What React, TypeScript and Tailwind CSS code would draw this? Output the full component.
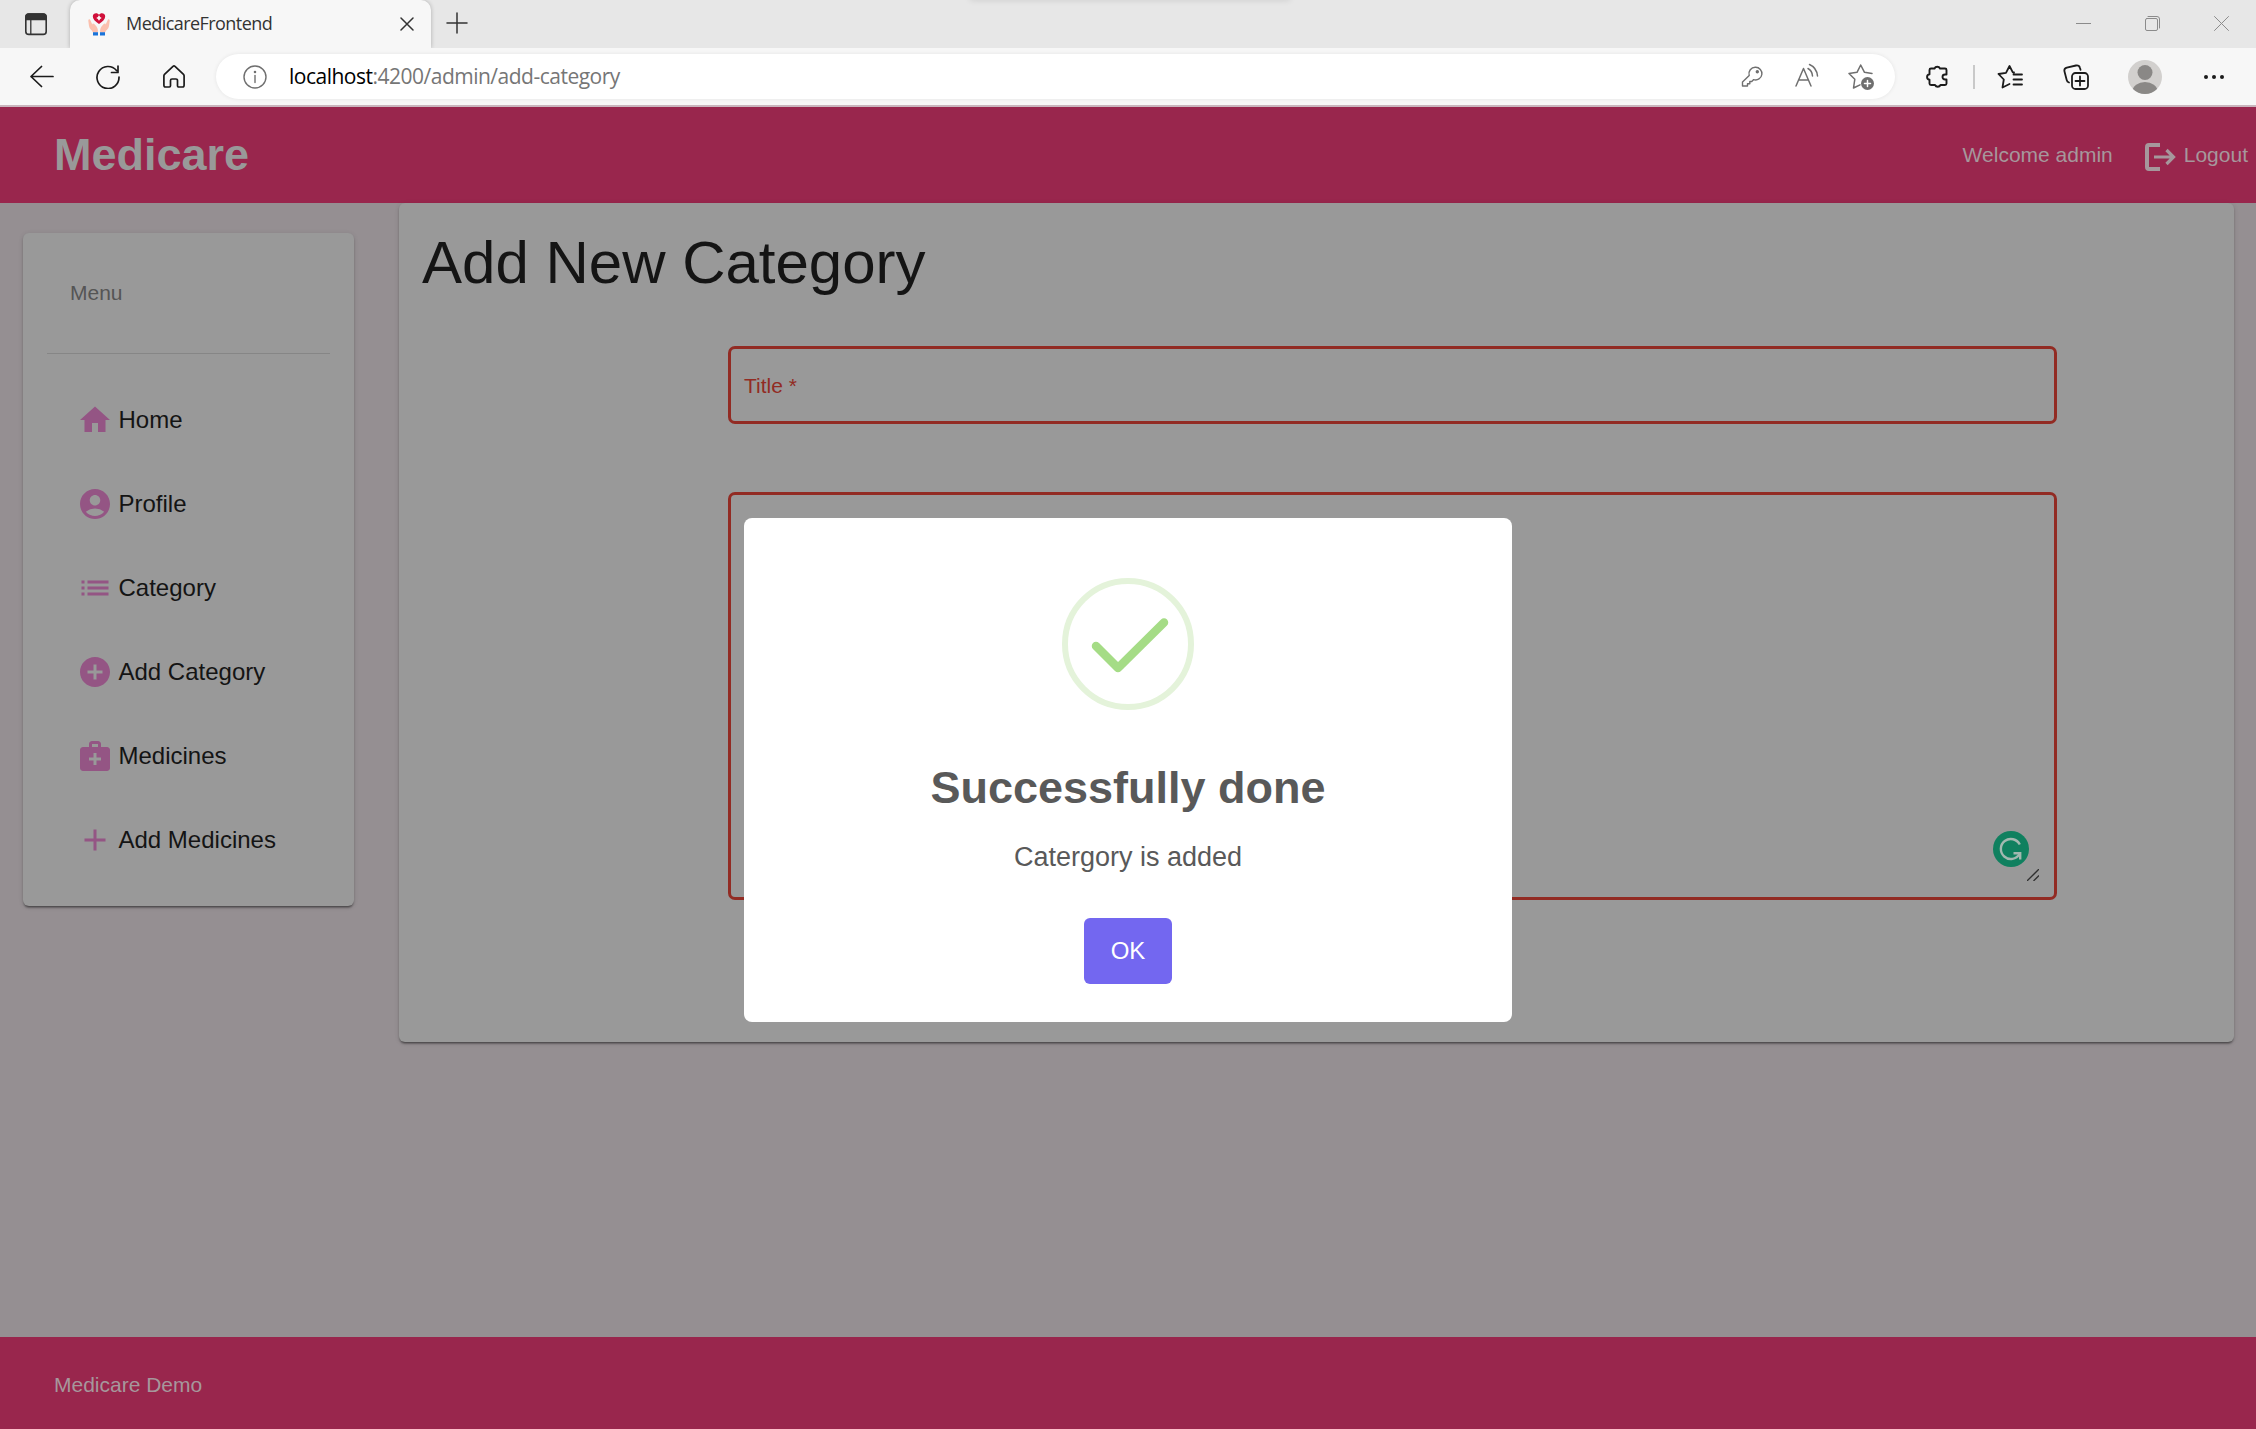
import React from "react";
import {
  MdHome,
  MdAccountCircle,
  MdList,
  MdAddCircle,
  MdMedicalServices,
  MdAdd,
} from "react-icons/md";

const stroke = {
  fill: "none",
  stroke: "currentColor",
  strokeLinecap: "round" as const,
  strokeLinejoin: "round" as const,
};

const menu = [
  { label: "Home", Icon: MdHome },
  { label: "Profile", Icon: MdAccountCircle },
  { label: "Category", Icon: MdList },
  { label: "Add Category", Icon: MdAddCircle },
  { label: "Medicines", Icon: MdMedicalServices },
  { label: "Add Medicines", Icon: MdAdd },
];

function Favicon() {
  return (
    <svg viewBox="0 0 24 24" className="h-[24px] w-[24px]">
      <path d="M3.500 8.500C3 6.500 1.200 6.800 1.300 8.800L2 14c.3 3 3 4 4 6.500h4.800c.4-3-.3-4.500-1.300-6L7.300 12c-1-1.200-2.500-.500-1.800 1zM20.500 8.500c.5-2 2.300-1.700 2.200.3L22 14c-.3 3-3 4-4 6.500h-4.800c-.4-3 .3-4.500 1.300-6l2.200-2.500c1-1.200 2.500-.500 1.800 1z" fill="#fbc0ae" />
      <path d="M12 12C8 9.500 5.800 7 5.800 4.300 5.800.800 10.500.200 12 2.800c1.500-2.600 6.200-2 6.200 1.500C18.200 7 16 9.500 12 12z" fill="#d0103a" />
      <path d="M12 3.800v4.400M9.800 6h4.400" stroke="#fff" strokeWidth="1.600" />
      <path d="M6 20.300h5v3.200H6zM13 20.300h5v3.200h-5z" fill="#1a73d9" />
    </svg>
  );
}

function TabStrip() {
  return (
    <div className="relative flex h-[48px] overflow-hidden bg-[#e7e7e7] text-[#333]">
      <div className="absolute left-[970px] top-[-6px] h-[6px] w-[320px] shadow-[0_0_6px_rgba(0,0,0,0.12)]" />
      <div className="flex w-[70px] items-center pl-[24px]">
        <svg viewBox="0 0 24 24" className="h-[24px] w-[24px]" {...stroke} strokeWidth="1.600">
          <rect x="1.800" y="2" width="20.400" height="20.400" rx="3" />
          <path d="M2 5c0-2 1-3 3-3h14c2 0 3 1 3 3v2.500H2z" fill="currentColor" />
          <path d="M6.800 8v14" strokeWidth="1.300" />
        </svg>
      </div>
      <div className="flex w-[361px] items-center rounded-t-[10px] bg-[#f7f7f7] pl-[17px] shadow-[0_0_4px_rgba(0,0,0,0.25)]">
        <Favicon />
        <span className="mb-[2px] ml-[15px] text-[18px] leading-[24px] tracking-[-0.55px]">MedicareFrontend</span>
        <svg viewBox="0 0 14 14" className="ml-auto mr-[17px] h-[14px] w-[14px]" {...stroke} strokeWidth="1.500">
          <path d="M1 1l12 12M13 1L1 13" />
        </svg>
      </div>
      <svg viewBox="0 0 22 22" className="ml-[15px] mt-[12px] h-[22px] w-[22px]" {...stroke} strokeWidth="1.500">
        <path d="M11 1v20M1 11h20" />
      </svg>
      <div className="mb-[1px] ml-auto mr-[27px] flex items-center gap-[54px] text-[#8b8b8b]">
        <svg viewBox="0 0 15 15" className="h-[15px] w-[15px]" {...stroke} strokeWidth="1">
          <path d="M0 7.500h15" />
        </svg>
        <svg viewBox="0 0 15 15" className="h-[15px] w-[15px]" {...stroke} strokeWidth="1">
          <rect x=".5" y="2.500" width="12" height="12" rx="1.500" />
          <path d="M3 .5h9a2.500 2.500 0 0 1 2.500 2.500v9" />
        </svg>
        <svg viewBox="0 0 15 15" className="h-[15px] w-[15px]" {...stroke} strokeWidth="1">
          <path d="M.5.500l14 14M14.500.500l-14 14" />
        </svg>
      </div>
    </div>
  );
}

function Toolbar() {
  return (
    <div className="flex h-[57px] items-center bg-[#f7f7f7] text-[#1b1b1b]">
      <svg viewBox="0 0 24 24" className="ml-[30px] h-[24px] w-[24px]" {...stroke} strokeWidth="1.700">
        <path d="M23 11.500H1M11.500 1.500L1 11.500l10.500 10" />
      </svg>
      <svg viewBox="0 0 24 24" className="ml-[42px] h-[24px] w-[24px]" {...stroke} strokeWidth="1.700">
        <path d="M23 12A11 11 0 1 1 20.500 5.500M22 1v6.500h-6.500" />
      </svg>
      <svg viewBox="0 0 24 24" className="ml-[42px] h-[24px] w-[24px]" {...stroke} strokeWidth="1.700">
        <path d="M13 1.300q-1-.8-2 0L2.500 9.300q-.6.600-.6 1.500V20.300A1.700 1.700 0 0 0 3.600 22h3.700A1.200 1.200 0 0 0 8.500 20.800v-5.300a1.500 1.500 0 0 1 1.500-1.500h4a1.500 1.500 0 0 1 1.500 1.500v5.300a1.200 1.200 0 0 0 1.200 1.200h3.700a1.700 1.700 0 0 0 1.700-1.700V10.800q0-.900-.6-1.500z" />
      </svg>
      <div className="ml-[30px] flex h-[45px] w-[1679px] items-center rounded-full bg-white pl-[27px] text-[#6f6f6f] shadow-[0_0_4px_rgba(0,0,0,0.08)]">
        <svg viewBox="0 0 24 24" className="h-[24px] w-[24px]" {...stroke} strokeWidth="1.400">
          <circle cx="12" cy="12" r="11" />
          <path d="M12 10.500v7" />
          <circle cx="12" cy="7" r=".6" fill="currentColor" />
        </svg>
        <span className="mb-[1px] ml-[22px] text-[21px] leading-[28px] tracking-[-0.5px] text-[#767676]">
          <span className="text-black">localhost</span>:4200/admin/add-category
        </span>
        <svg viewBox="0 0 24 24" className="ml-auto h-[24px] w-[24px]" {...stroke} strokeWidth="1.400">
          <path d="M15.500 2.300a6.300 6.300 0 1 1-1.800 12.300L11.800 16.500H9.800v2.300H7.500v2.200H2.500v-4L9.200 10.400A6.300 6.300 0 0 1 15.500 2.300z" />
          <circle cx="17.300" cy="6.800" r="1" fill="currentColor" />
        </svg>
        <svg viewBox="0 0 26 26" className="mb-[2px] ml-[30px] h-[26px] w-[26px]" {...stroke} strokeWidth="1.500">
          <path d="M2 23L9.500 5.500 17 23M4.500 17h10M14 5.500c2.800 1.500 4.300 4 4.500 7.500M15.500 1.500c5 2.200 7.500 6 8 11.500" />
        </svg>
        <svg viewBox="0 0 28 28" className="ml-[27px] mr-[20px] h-[28px] w-[28px]" {...stroke} strokeWidth="1.500">
          <path d="M25 10.500l-7.500-1.200L13.700 2 10 9.300 2 10.500l5.800 5.800L6.500 25l6.500-3.200" />
          <circle cx="20.500" cy="20.500" r="6.500" fill="currentColor" stroke="none" />
          <path d="M20.500 17.500v6M17.500 20.500h6" stroke="#fff" />
        </svg>
      </div>
      <svg viewBox="0 0 24 26" className="ml-[30px] h-[26px] w-[24px]" {...stroke} strokeWidth="1.900">
        <path d="M6 4.500H9.500a3 2.800 0 0 1 5.500 0h5q1.500 0 1.500 1.500v4.500h-1.500a2.500 2.500 0 0 0 0 5h1.500v4q0 1.500-1.500 1.500H15.500a3 2.800 0 0 1-5.500 0H6Q4.500 21 4.500 19.500V15.700a3 2.800 0 0 1 0-5.500V6q0-1.500 1.500-1.500z" />
      </svg>
      <div className="ml-[24px] h-[24px] w-[2px] bg-[#c9c9c9]" />
      <svg viewBox="0 0 26 26" className="ml-[22px] h-[26px] w-[26px]" {...stroke} strokeWidth="1.800">
        <path d="M17 8.500l-1.200-.2L12.500 2 9 8.800 1.500 10l5.300 5.500L5.500 23.500l7-3.500M16.500 10.500H25M16.500 15.500H25M16.500 20.500H25" />
      </svg>
      <svg viewBox="0 0 26 26" className="ml-[40px] h-[26px] w-[26px]" {...stroke} strokeWidth="1.800">
        <rect x="9" y="9" width="16" height="16" rx="3.500" />
        <path d="M17 12.500v9M12.500 17h9M6 18.500c-1.500-.500-2-1.200-2.300-2.500L1.500 7.500C1 5.500 2 4.200 3.800 3.700l9.200-2.200c2-.500 3.500.500 4 2.500L17.500 5.800" />
      </svg>
      <svg viewBox="0 0 34 34" className="ml-[39px] h-[34px] w-[34px]">
        <clipPath id="avatar"><circle cx="17" cy="17" r="17" /></clipPath>
        <circle cx="17" cy="17" r="17" fill="#d2d0ce" />
        <g clipPath="url(#avatar)" fill="#8a8886">
          <circle cx="17" cy="12.500" r="7.500" />
          <ellipse cx="17" cy="31" rx="12.500" ry="9" />
        </g>
      </svg>
      <svg viewBox="0 0 20 4" className="ml-[42px] h-[4px] w-[20px]" fill="currentColor">
        <circle cx="2" cy="2" r="2" /><circle cx="10" cy="2" r="2" /><circle cx="18" cy="2" r="2" />
      </svg>
    </div>
  );
}

function SuccessDialog() {
  return (
    <div className="absolute left-[744px] top-[518px] flex h-[504px] w-[768px] flex-col items-center rounded-[8px] bg-white pt-[60px] text-[#595959]">
      <svg viewBox="0 0 132 132" className="h-[132px] w-[132px]" fill="none">
        <circle cx="66" cy="66" r="63" stroke="#e4f3da" strokeWidth="6" />
        <path d="M34 68l22 22L102 44.500" stroke="#a5dc86" strokeWidth="8.500" strokeLinecap="round" strokeLinejoin="round" />
      </svg>
      <h2 className="mt-[52px] text-[45px] font-bold leading-[52px]">Successfully done</h2>
      <p className="mt-[27px] text-[27px] leading-[32px]">Catergory is added</p>
      <button className="mt-[45px] h-[66px] w-[88px] rounded-[6px] bg-[#7367f0] text-[24px] text-white">OK</button>
    </div>
  );
}

export default function App() {
  return (
    <div className="relative flex h-[1429px] w-[2256px] flex-col overflow-hidden bg-[#958f92] font-['Liberation_Sans',sans-serif]">
      <div className="font-['Open_Sans',sans-serif]">
        <TabStrip />
        <Toolbar />
      </div>
      <div className="h-[2px] bg-[#c9b5bd]" />
      <header className="flex h-[96px] shrink-0 items-center bg-[#99264d] pl-[54px] pr-[8px] text-[21px] text-[#a6979c]">
        <h1 className="text-[45px] font-bold leading-[52px] text-[#999]">Medicare</h1>
        <span className="ml-auto">Welcome admin</span>
        <svg viewBox="0 0 32 30" className="ml-[31px] mt-[4px] h-[30px] w-[32px]" fill="none" stroke="currentColor" strokeWidth="4">
          <path d="M16 3H5Q3 3 3 5v20q0 2 2 2h11" />
          <path d="M10 15h19M22.500 8l7 7-7 7" strokeWidth="3.200" />
        </svg>
        <span className="ml-[8px]">Logout</span>
      </header>

      <div className="flex flex-1 items-start pl-[23px]">
        <aside className="mt-[30px] h-[673px] w-[331px] rounded-[6px] bg-[#999] px-[24px] shadow-[0_3px_2px_-2px_rgba(0,0,0,0.35),0_2px_2px_rgba(0,0,0,0.2),0_1px_5px_rgba(0,0,0,0.12)]">
          <div className="flex h-[121px] items-center border-b border-[#868686] pl-[23px] text-[21px] text-[#555]">Menu</div>
          <nav className="pt-[24px]">
            {menu.map(({ label, Icon }) => (
              <a key={label} className="flex h-[84px] items-center pl-[29.5px] text-[24px] text-[#141414]">
                <Icon className="h-[36px] w-[36px] text-[#945584]" />
                <span className="ml-[6px]">{label}</span>
              </a>
            ))}
          </nav>
        </aside>

        <main className="ml-[45px] h-[839px] w-[1835px] rounded-[6px] bg-[#999] px-[24px] shadow-[0_3px_2px_-2px_rgba(0,0,0,0.35),0_2px_2px_rgba(0,0,0,0.2),0_1px_5px_rgba(0,0,0,0.12)]">
          <h2 className="-ml-px pt-[24px] text-[60px] leading-[72px] text-[#141414]">Add New Category</h2>
          <form className="ml-[305px] mt-[47px] w-[1329px]">
            <div className="flex h-[78px] items-center rounded-[7px] border-[3px] border-[#922b23] pl-[13px] pt-[2px] text-[21px] text-[#922b23]">
              Title *
            </div>
            <div className="mt-[68px] flex h-[408px] flex-col items-end justify-end rounded-[7px] border-[3px] border-[#922b23] pb-[16px] pr-[15px]">
              <svg viewBox="0 0 36 36" className="mr-[10px] h-[36px] w-[36px]" fill="none" stroke="#a3b8b0" strokeWidth="2.400">
                <circle cx="18" cy="18" r="18" fill="#10805f" stroke="none" />
                <path d="M26.800 13.500A10 10 0 1 0 26.500 23" />
                <path d="M20.500 22.200h6.700v6.300" />
              </svg>
              <svg viewBox="0 0 12 12" className="mt-[2px] h-[12px] w-[12px]" stroke="#303030" strokeWidth="1.300">
                <path d="M0 12L12 0M6.500 12L12 6.500" />
              </svg>
            </div>
          </form>
        </main>
      </div>

      <footer className="flex h-[92px] shrink-0 items-center bg-[#99264d] pl-[54px] pt-[3px] text-[21px] text-[#a6979c]">Medicare Demo</footer>
      <SuccessDialog />
    </div>
  );
}
